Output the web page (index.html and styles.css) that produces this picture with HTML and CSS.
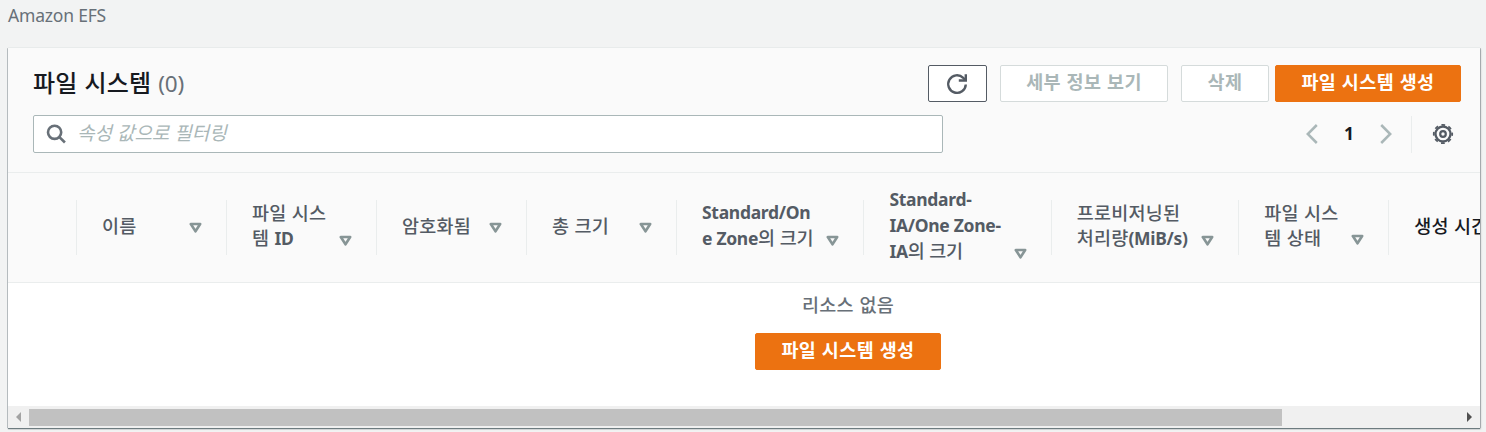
FILE: index.html
```html
<!DOCTYPE html>
<html lang="ko">
<head>
<meta charset="utf-8">
<title>Amazon EFS</title>
<link rel="stylesheet" href="styles.css">
</head>
<body>
<nav class="breadcrumb">Amazon EFS</nav>
<main class="card">
  <header class="card-header">
    <div class="title-row">
      <h1 class="title">파일 시스템 <span class="count">(0)</span></h1>
      <div class="actions">
        <button class="btn btn-refresh" aria-label="새로 고침"><svg width="24" height="24" viewBox="0 0 24 24" fill="none" stroke="#545b64" stroke-width="2.4"><path d="M20.800 12.500a8.800 8.800 0 1 1-2.600-6.700l1.700 1.900"/><path d="M20.800 2.300v6.200h-7"/></svg></button>
        <button class="btn btn-details" disabled>세부 정보 보기</button>
        <button class="btn btn-delete" disabled>삭제</button>
        <button class="btn btn-primary">파일 시스템 생성</button>
      </div>
    </div>
    <div class="filter-row">
      <div class="search">
        <svg width="20" height="20" viewBox="0 0 20 20" fill="none" stroke="#687078" stroke-width="2.6"><circle cx="8.600" cy="8.300" r="6.600"/><path d="M13.200 12.800l5.700 5.700"/></svg>
        <span class="placeholder">속성 값으로 필터링</span>
      </div>
      <div class="pager">
        <svg width="12" height="20" viewBox="0 0 12 20" fill="none" stroke="#aab7b8" stroke-width="2.5"><path d="M10.800 1L1.800 10l9 9"/></svg>
        <span class="page">1</span>
        <svg width="12" height="20" viewBox="0 0 12 20" fill="none" stroke="#aab7b8" stroke-width="2.5"><path d="M1.200 1l9 9-9 9"/></svg>
        <span class="divider"></span>
        <svg class="gear" width="22" height="22" viewBox="0 0 22 22" fill="none" stroke="#545b64"><circle cx="11" cy="11" r="7.500" stroke-width="2.300"/><circle cx="11" cy="11" r="9.200" stroke-width="1.800" stroke-dasharray="3.700 3.526" stroke-dashoffset="1.850"/><circle cx="11" cy="11" r="2.800" stroke-width="2.200"/></svg>
      </div>
    </div>
  </header>
  <div class="thead">
    <div class="th select"></div>
    <div class="th"><div class="label"><span>이름</span><svg class="sort" viewBox="0 0 13 11"><path d="M1.800 2h9.400L6.500 9.300z"/></svg></div></div>
    <div class="th"><div class="label"><span>파일 시스<br>템 <b class="latin">ID</b></span><svg class="sort" viewBox="0 0 13 11"><path d="M1.800 2h9.400L6.500 9.300z"/></svg></div></div>
    <div class="th"><div class="label"><span>암호화됨</span><svg class="sort" viewBox="0 0 13 11"><path d="M1.800 2h9.400L6.500 9.300z"/></svg></div></div>
    <div class="th"><div class="label"><span>총 크기</span><svg class="sort" viewBox="0 0 13 11"><path d="M1.800 2h9.400L6.500 9.300z"/></svg></div></div>
    <div class="th wide"><div class="label"><span><b class="latin">Standard/On</b><br><b class="latin">e Zone</b><span class="tight">의 크기</span></span><svg class="sort" viewBox="0 0 13 11"><path d="M1.800 2h9.400L6.500 9.300z"/></svg></div></div>
    <div class="th wide"><div class="label"><span><b class="latin">Standard-</b><br><b class="latin">IA/One Zone-</b><br><b class="latin">IA</b><span class="tight">의 크기</span></span><svg class="sort" viewBox="0 0 13 11"><path d="M1.800 2h9.400L6.500 9.300z"/></svg></div></div>
    <div class="th wide"><div class="label"><span>프로비저닝된<br>처리량<b class="latin">(MiB/s)</b></span><svg class="sort" viewBox="0 0 13 11"><path d="M1.800 2h9.400L6.500 9.300z"/></svg></div></div>
    <div class="th"><div class="label"><span>파일 시스<br>템 상태</span><svg class="sort" viewBox="0 0 13 11"><path d="M1.800 2h9.400L6.500 9.300z"/></svg></div></div>
    <div class="th active"><div class="label"><span>생성 시간</span></div></div>
  </div>
  <div class="empty">
    <p class="empty-text">리소스 없음</p>
    <button class="btn btn-primary">파일 시스템 생성</button>
  </div>
  <div class="scrollbar">
    <svg width="21" height="22" viewBox="0 0 21 22"><path d="M13 6v10l-5-5z" fill="#a3a3a3"/></svg>
    <div class="thumb"></div>
    <svg width="21" height="22" viewBox="0 0 21 22"><path d="M8 6v10l5-5z" fill="#505050"/></svg>
  </div>
</main>
</body>
</html>
```
FILE: styles.css
```css
* { box-sizing: border-box; }
body {
  margin: 0;
  height: 432px;
  overflow: hidden;
  background: #f2f3f3;
  color: #16191f;
  font-family: "Noto Sans", "Noto Sans CJK KR", sans-serif;
  font-size: 17.5px;
}
.breadcrumb {
  height: 48px;
  padding: 2px 8px 0;
  line-height: 26px;
  letter-spacing: -.2px;
  color: #687078;
}
.card {
  width: 1472px;
  height: 380px;
  margin-left: 8px;
  background: #fff;
  overflow: hidden;
  box-shadow: 0 1px 1px #001c2480, 1px 1px 2px #00000026, -1px 0 0 #c9cdcf, 1px 0 0 #c9cdcf, 0 -1px 0 #eaeded;
}
.card-header {
  height: 125px;
  padding: 17px 19px 0 25px;
  background: #fafafa;
  border-bottom: 1px solid #eaeded;
}
.title-row { display: flex; justify-content: space-between; height: 50px; }
.title {
  margin: 0;
  font-size: 24px;
  font-weight: 500;
  font-family: "Noto Sans CJK KR", sans-serif;
  line-height: 34px;
  letter-spacing: .2px;
  white-space: nowrap;
}
.count { color: #687078; font: 400 22.5px "Noto Sans", sans-serif; letter-spacing: -.2px; }
.actions { display: flex; }
.btn {
  height: 37px;
  padding: 0 0 6px;
  border: 1px solid #d5dbdb;
  border-radius: 2px;
  background: #fff;
  font: 700 18.5px "Noto Sans CJK KR", sans-serif;
  letter-spacing: .4px;
  white-space: nowrap;
  display: flex;
  align-items: center;
  justify-content: center;
}
.btn:disabled { color: #aab7b8; }
.btn-refresh { width: 59px; margin-right: 13px; padding: 0 2px 0 0; border-color: #545b64; }
.btn-details { width: 168px; margin-right: 13px; }
.btn-delete { width: 88px; margin-right: 6px; }
.btn-primary { width: 186px; background: #ec7211; border-color: #ec7211; color: #fff; }
.filter-row { display: flex; justify-content: space-between; height: 38px; }
.search {
  width: 910px;
  padding-left: 12px;
  display: flex;
  align-items: center;
  border: 1px solid #aab7b8;
  border-radius: 2px;
  background: #fff;
}
.placeholder {
  margin: -5px 0 0 11px;
  color: #aab7b8;
  font-style: italic;
  font-size: 19px;
}
.pager { display: flex; align-items: center; padding-right: 7px; }
.page { width: 62px; margin-top: -3px; text-align: center; font-weight: 700; font-size: 17.5px; }
.divider { width: 1px; height: 37px; margin-left: 19px; background: #eaeded; }
.gear { margin-left: 20px; }
.thead {
  display: flex;
  align-items: center;
  height: 110px;
  background: #fafafa;
  border-bottom: 1px solid #eaeded;
}
.th {
  flex: none;
  width: 150px;
  height: 55px;
  padding: 0 24px 5px 25px;
  display: flex;
  align-items: center;
  border-right: 1px solid #eaeded;
  color: #545b64;
  font: 500 18.5px/25px "Noto Sans CJK KR", sans-serif;
  letter-spacing: .2px;
  white-space: nowrap;
}
.label { display: flex; flex: 1; align-items: flex-end; justify-content: space-between; }
.select { width: 69px; }
.wide { width: 187.4px; }
.active { color: #16191f; }
.latin { font: 700 17.5px/25px "Noto Sans", sans-serif; letter-spacing: -.3px; }
.tight { letter-spacing: -.3px; }
.sort {
  width: 13px;
  height: 11px;
  flex: none;
  margin-bottom: 5px;
  fill: none;
  stroke: #879596;
  stroke-width: 2.6;
  stroke-linejoin: round;
}
.empty {
  height: 123px;
  padding: 8px 0 0 208px;
  display: flex;
  flex-direction: column;
  align-items: center;
}
.empty-text {
  margin: 0 0 16px;
  color: #687078;
  font: 500 18.5px/26px "Noto Sans CJK KR", sans-serif;
  letter-spacing: .3px;
}
.scrollbar { display: flex; align-items: center; height: 22px; background: #f0f0f0; }
.thumb { width: 1253px; height: 17px; margin-right: 177px; background: #c1c1c1; }
```
